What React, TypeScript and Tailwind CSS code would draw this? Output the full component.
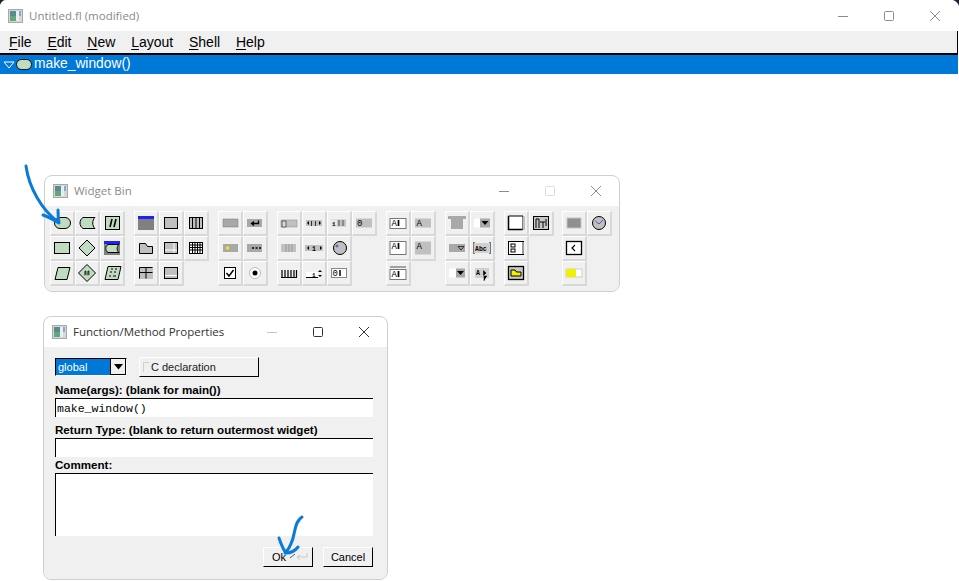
import { ReactNode } from 'react';

const G = '#c0dcc0';
const K = '#000';
const D = '#a8a8a8';

const AppIcon = () => (
    <svg width="15" height="14" viewBox="0 0 15 14" className="shrink-0">
        <rect x="0.5" y="0.5" width="14" height="13" fill="#d4d8dc" stroke="#a8a8a8" />
        <rect x="2" y="2" width="6" height="10" fill="#5a8a8c" />
        <rect x="2" y="7" width="6" height="5" fill="#62a878" />
        <rect x="8" y="2" width="3" height="10" fill="#e8eef2" />
        <rect x="11" y="2" width="2" height="5" fill="#8aa8c4" />
    </svg>
);

const WinButtons = ({ dim, closeDark }: { dim?: boolean; closeDark?: boolean }) => {
    const c = closeDark ? '#333' : '#8c8c8c';
    return (
        <div className="flex items-center gap-[34px]">
            <svg width="12" height="12" viewBox="0 0 12 12">
                <path d="M1 6.5H11" stroke={closeDark ? '#c4c4c4' : '#8c8c8c'} />
            </svg>
            <svg width="12" height="12" viewBox="0 0 12 12">
                <rect x="1.5" y="1.5" width="9" height="9" rx="1" fill="none" stroke={dim ? '#dcdcdc' : c} />
            </svg>
            <svg width="12" height="12" viewBox="0 0 12 12">
                <path d="M1 1L11 11M11 1L1 11" stroke={c} />
            </svg>
        </div>
    );
};

const T = ({ x, y, s = 7, c = K, b = false, children }: { x: number; y: number; s?: number; c?: string; b?: boolean; children: ReactNode }) => (
    <text x={x} y={y} fontSize={s} fill={c} fontWeight={b ? 700 : 400} fontFamily="'Liberation Mono', monospace">
        {children}
    </text>
);

const icons: Record<string, ReactNode> = {
    fn: <rect x="4.5" y="6.5" width="16" height="11" rx="5.5" fill={G} stroke={K} />,
    code: <path d="M8 6.5H20C17 9 17 15 20 17.5H8C4 15 4 9 8 6.5Z" fill={G} stroke={K} />,
    block: (
        <>
            <rect x="5.5" y="5.5" width="14" height="13" fill={G} stroke={K} />
            <path d="M10 16L12 8M14 16L16 8" stroke={K} strokeWidth="1.6" />
        </>
    ),
    comment: <rect x="4.5" y="6.5" width="15" height="11" fill={G} stroke={K} />,
    decl: <path d="M12 4L20 12L12 20L4 12Z" fill={G} stroke={K} />,
    klass: (
        <>
            <rect x="4" y="5" width="16" height="14" fill="#808080" />
            <rect x="4" y="5" width="16" height="3" fill="#2222ee" />
            <path d="M8 8.5H19C16.5 10.5 16.5 14.5 19 16.5H8C5 14.5 5 10.5 8 8.5Z" fill={G} stroke={K} />
        </>
    ),
    para: <path d="M8 6.5H20L17 18.5H5Z" fill={G} stroke={K} />,
    declBlock: (
        <>
            <path d="M12 3.5L20.5 12L12 20.5L3.5 12Z" fill={G} stroke={K} />
            <path d="M10.5 9.5L10 14.5M13.5 9.5L13 14.5M9 11H15M9 13H15" stroke={K} strokeWidth="0.7" />
        </>
    ),
    data: (
        <>
            <path d="M8 5.5H21L18 18.5H5Z" fill={G} stroke={K} />
            <path d="M11 8H13M15 8H17M9 15H11M13 15H16M10 11H12M14 11H16" stroke={K} strokeWidth="1.2" />
        </>
    ),
    window: (
        <>
            <rect x="4" y="5" width="16" height="14" fill="#808080" />
            <rect x="4" y="5" width="16" height="3" fill="#2222ee" />
        </>
    ),
    group: <rect x="5.5" y="6.5" width="13" height="11" fill="#c0c0c0" stroke={K} />,
    pack: (
        <>
            <rect x="5.5" y="6.5" width="13" height="11" fill="#c0c0c0" stroke={K} />
            <path d="M8.5 7V17M12 7V17M15.5 7V17" stroke={K} />
        </>
    ),
    tabs: <path d="M5.5 17.5V7.5H11.5L13.5 10.5H18.5V17.5Z" fill="#c0c0c0" stroke={K} />,
    scroll: (
        <>
            <rect x="5.5" y="6.5" width="13" height="11" fill="#c0c0c0" stroke={K} />
            <path d="M6 14H18M15 7V17" stroke="#fff" />
        </>
    ),
    table: (
        <>
            <rect x="5.5" y="6.5" width="13" height="11" fill="#fff" stroke={K} />
            <path d="M6 9H18M6 11.5H18M6 14H18M8.5 7V17M11 7V17M13.5 7V17M16 7V17" stroke={K} />
        </>
    ),
    tile: (
        <>
            <rect x="5" y="6" width="14" height="12" fill="#c0c0c0" />
            <path d="M5.5 11.5H18.5M12 6.5V17.5" stroke={K} />
            <path d="M5.5 6.5H18.5M5.5 6.5V17.5" stroke={K} />
        </>
    ),
    wizard: (
        <>
            <rect x="5.5" y="6.5" width="13" height="11" fill="#c0c0c0" stroke={K} />
            <path d="M6 14.5H18" stroke="#fff" />
        </>
    ),
    button: <rect x="5" y="8" width="15" height="8" fill={D} stroke="#777" strokeWidth="0.5" />,
    ret: (
        <>
            <rect x="4" y="8" width="15" height="8" fill={D} />
            <path d="M15.5 9.5V12.5H9M11 10.5L8.5 12.5L11 14.5" stroke={K} strokeWidth="1.3" fill="none" />
        </>
    ),
    light: (
        <>
            <rect x="5" y="8" width="15" height="8" fill={D} />
            <rect x="8" y="10.5" width="3" height="3" fill="#f0f000" />
        </>
    ),
    repeat: (
        <>
            <rect x="4" y="8" width="15" height="8" fill={D} />
            <path d="M9 12H11M12.5 12H14.5M16 12H18" stroke={K} strokeWidth="1.5" />
        </>
    ),
    check: (
        <>
            <rect x="6.5" y="6.5" width="11" height="11" fill="#fff" stroke={K} />
            <path d="M8.5 12L11 15L15.5 9" stroke={K} strokeWidth="1.5" fill="none" />
        </>
    ),
    radio: (
        <>
            <circle cx="12" cy="12" r="5.5" fill="#fff" stroke="#bbb" />
            <circle cx="12" cy="12" r="2.5" fill={K} />
        </>
    ),
    slider: (
        <>
            <rect x="4" y="9" width="16" height="7" fill="#c0c0c0" stroke="#888" strokeWidth="0.5" />
            <rect x="5" y="10" width="4" height="6" fill="#d8d8d8" stroke={K} strokeWidth="0.5" />
        </>
    ),
    spinBar: (
        <>
            <rect x="4" y="9" width="16" height="6" fill="#c0c0c0" />
            <path d="M5 12L7 10V14ZM19 12L17 10V14Z" fill={K} />
            <path d="M9.5 10V15M13.5 10V15" stroke="#333" />
        </>
    ),
    valSlider: (
        <>
            <rect x="4" y="8.5" width="15" height="7" fill="#c0c0c0" />
            <rect x="4" y="8.5" width="6" height="7" fill="#e8e8e8" />
            <T x={5} y={14.5} s={6} b>1</T>
            <path d="M12 9V15M16 9V15" stroke="#555" />
        </>
    ),
    valOut: (
        <>
            <rect x="4" y="7.5" width="16" height="9" fill="#c0c0c0" />
            <T x={5} y={15} s={9}>0</T>
        </>
    ),
    scrollbar: (
        <>
            <rect x="4" y="8" width="15" height="8" fill="#c0c0c0" />
            <path d="M9 8V16M12 8V16M15 8V16" stroke="#999" />
        </>
    ),
    spinAdj: (
        <>
            <rect x="3" y="9" width="18" height="6" fill="#c0c0c0" />
            <path d="M5 12L7 10V14ZM20 12L18 10V14Z" fill={K} />
            <T x={10} y={14.5} s={6.5} b>1</T>
        </>
    ),
    dial: (
        <>
            <circle cx="13" cy="12" r="6.5" fill="#c0c0c0" stroke={K} />
            <circle cx="10" cy="10" r="1" fill="none" stroke="#2222cc" strokeWidth="0.7" />
        </>
    ),
    ticks: <path d="M4 16.5H20M5 9V16M8 9V16M11 9V16M14 9V16M17 9V16M19.5 9V16" stroke={K} strokeWidth="1.2" />,
    spinner: (
        <>
            <rect x="4" y="11" width="12" height="5" fill="#fff" />
            <path d="M4 16.5H16" stroke={K} />
            <T x={10} y={15.5} s={6} b>1</T>
            <path d="M18 9L20 11H16ZM18 16L20 14H16Z" fill={K} />
        </>
    ),
    valInput: (
        <>
            <rect x="4.5" y="7.5" width="15" height="9" fill="#fff" stroke="#888" />
            <T x={5.5} y={15} s={9}>0</T>
            <path d="M13 9V15" stroke={K} strokeWidth="1.5" />
        </>
    ),
    input: (
        <>
            <rect x="4" y="7.5" width="16" height="10" fill="#fff" stroke="#777" />
            <T x={5.5} y={15} s={9}>A</T>
            <path d="M12.5 9V15" stroke={K} strokeWidth="1.7" />
        </>
    ),
    output: (
        <>
            <rect x="4" y="7.5" width="16" height="9" fill="#c0c0c0" />
            <T x={5.5} y={14.5} s={9}>A</T>
        </>
    ),
    editor: (
        <>
            <rect x="4" y="5.5" width="16" height="13" fill="#fff" stroke="#777" />
            <T x={5.5} y={13} s={9}>A</T>
            <path d="M12.5 7V13" stroke={K} strokeWidth="1.7" />
        </>
    ),
    display: (
        <>
            <rect x="4" y="5.5" width="16" height="13" fill="#c0c0c0" />
            <T x={5.5} y={13} s={9}>A</T>
        </>
    ),
    term: (
        <>
            <rect x="4" y="8.5" width="16" height="10" fill="#fff" stroke="#777" />
            <path d="M4 6H20" stroke="#555" />
            <T x={5.5} y={16} s={9}>A</T>
            <path d="M12.5 10V16" stroke={K} strokeWidth="1.7" />
        </>
    ),
    menubar: (
        <>
            <rect x="3" y="5" width="18" height="3" fill={D} />
            <rect x="6" y="8" width="12" height="10" fill={D} />
        </>
    ),
    choice: (
        <>
            <rect x="4" y="7.5" width="6" height="9" fill="#fff" />
            <rect x="10" y="7.5" width="10" height="9" fill={D} />
            <path d="M11.5 10H18.5L15 14Z" fill={K} />
        </>
    ),
    menuBtn: (
        <>
            <rect x="4" y="8" width="16" height="8" fill={D} />
            <path d="M13 10.5H19L16 14Z" fill="none" stroke="#333" />
        </>
    ),
    browser: (
        <>
            <path d="M4 6V18M20 6V18" stroke={K} />
            <rect x="4" y="7" width="16" height="10" fill="#d0d0d0" />
            <T x={5} y={15} s={6.5} b>Abc</T>
        </>
    ),
    inChoice: (
        <>
            <rect x="4" y="7.5" width="7" height="9" fill="#fff" />
            <rect x="11" y="7.5" width="9" height="9" fill={D} />
            <path d="M12 10H19L15.5 14Z" fill={K} />
        </>
    ),
    tree: (
        <>
            <rect x="5" y="7" width="14" height="10" fill="#d0d0d0" />
            <T x={6} y={14} s={6.5} b>A</T>
            <path d="M13.5 9.5V14.5L16 12Z M17 15H14V20" fill={K} stroke={K} strokeWidth="0.5" />
        </>
    ),
    frame: (
        <>
            <rect x="4" y="5" width="15" height="14" fill="#fff" />
            <path d="M4.5 5V18.5H18.5" stroke={K} strokeWidth="1.5" fill="none" />
            <path d="M4.5 5H19V19" stroke={K} fill="none" />
            <rect x="19" y="5" width="2" height="14" fill="#c0c0c0" />
        </>
    ),
    frameTabs: (
        <>
            <rect x="4.5" y="5.5" width="15" height="13" fill="#c8c8c8" stroke={K} />
            <path d="M7 8V17M7 8H10V17M11 11H16M14 11V17M17 8V15" stroke={K} fill="none" />
        </>
    ),
    frameList: (
        <>
            <rect x="4.5" y="5.5" width="15" height="13" fill="#fff" stroke={K} />
            <rect x="7" y="8" width="4" height="3" fill="none" stroke={K} />
            <rect x="7" y="13" width="4" height="3" fill="none" stroke={K} />
            <rect x="18" y="6" width="2" height="12" fill="#999" />
        </>
    ),
    frameFolder: (
        <>
            <rect x="4.5" y="5.5" width="15" height="13" fill="#c8c8c8" stroke={K} strokeWidth="1.3" />
            <path d="M7 15V9H11L12.5 11H17V15Z" fill="#f0f000" stroke={K} />
        </>
    ),
    box: <rect x="5" y="7" width="14" height="10" fill="#909090" stroke="#c4c4c4" />,
    clock: (
        <>
            <circle cx="12" cy="12" r="6.5" fill="#c0c0c0" stroke={K} />
            <path d="M8.5 10L12 13L16 9" stroke="#2222cc" strokeWidth="0.7" fill="none" />
        </>
    ),
    frameHelp: (
        <>
            <rect x="4.5" y="5.5" width="15" height="13" fill="#fff" stroke={K} strokeWidth="1.3" />
            <path d="M13 9L10 12L13 15" stroke={K} fill="none" strokeWidth="1.2" />
        </>
    ),
    progress: (
        <>
            <rect x="4" y="8" width="16" height="8" fill="#fff" stroke="#ccc" />
            <rect x="4" y="8" width="10" height="8" fill="#f0f000" />
        </>
    ),
};

const groups: (string | null)[][][] = [
    [['fn', 'code', 'block'], ['comment', 'decl', 'klass'], ['para', 'declBlock', 'data']],
    [['window', 'group', 'pack'], ['tabs', 'scroll', 'table'], ['tile', 'wizard', null]],
    [['button', 'ret'], ['light', 'repeat'], ['check', 'radio']],
    [['slider', 'spinBar', 'valSlider', 'valOut'], ['scrollbar', 'spinAdj', 'dial', null], ['ticks', 'spinner', 'valInput', null]],
    [['input', 'output'], ['editor', 'display'], ['term', null]],
    [['menubar', 'choice'], ['menuBtn', 'browser'], ['inChoice', 'tree']],
    [['frame', 'frameTabs'], ['frameList', null], ['frameFolder', null]],
    [['box', 'clock'], ['frameHelp', null], ['progress', null]],
];

const Cell = ({ name }: { name: string | null }) =>
    name ? (
        <div className="w-[25px] h-[25px] bg-[#f0f0f0] border-t border-l border-t-white border-l-white border-r-2 border-b-2 border-r-[#d8d8d8] border-b-[#d8d8d8] flex items-center justify-center">
            <svg width="24" height="24" viewBox="0 0 24 24" className="shrink-0">
                {icons[name]}
            </svg>
        </div>
    ) : (
        <div className="w-[25px] h-[25px]" />
    );

const WidgetBin = () => (
    <div className="absolute left-[44px] top-[175px] w-[576px] h-[117px] rounded-lg border border-[#cfcfcf] bg-white overflow-hidden flex flex-col">
        <div className="h-[30px] shrink-0 flex items-center justify-between pl-[8px] pr-[17px]">
            <div className="flex items-center gap-[6px]">
                <AppIcon />
                <span className="text-[11.5px] text-[#8a8a8a] font-['Open_Sans',sans-serif]">Widget Bin</span>
            </div>
            <WinButtons dim />
        </div>
        <div className="flex-1 bg-[#f0f0f0] flex gap-[9px] pl-[5px] pt-[5px]">
            {groups.map((rows, i) => (
                <div key={i} className="flex flex-col last:ml-[-1px]">
                    {rows.map((row, j) => (
                        <div key={j} className="flex">
                            {row.map((name, k) => (
                                <Cell key={k} name={name} />
                            ))}
                        </div>
                    ))}
                </div>
            ))}
        </div>
    </div>
);

const FieldLabel = ({ children }: { children: ReactNode }) => (
    <div className="h-[13px] text-[11.6px] leading-[13px] font-bold text-black">{children}</div>
);

const Dialog = () => (
    <div className="absolute left-[43px] top-[316px] w-[345px] h-[264px] rounded-lg border border-[#cfcfcf] bg-white overflow-hidden flex flex-col">
        <div className="h-[30px] shrink-0 flex items-center justify-between pl-[8px] pr-[17px]">
            <div className="flex items-center gap-[6px]">
                <AppIcon />
                <span className="text-[11.5px] text-[#333] font-['Open_Sans',sans-serif]">Function/Method Properties</span>
            </div>
            <WinButtons closeDark />
        </div>
        <div className="flex-1 bg-[#f0f0f0] pl-[11px] pr-[14px] pt-[10px] flex flex-col">
            <div className="flex items-center gap-[12px] h-[20px]">
                <div className="w-[72px] h-[18px] flex border-t border-l border-black border-r border-b border-r-white border-b-white bg-white">
                    <div className="w-[54px] bg-[#0078d7] text-white text-[11px] leading-[17px] pl-[2px]">global</div>
                    <div className="flex-1 bg-[#f0f0f0] border-l border-r border-b border-black flex items-center justify-center">
                        <svg width="9" height="6" viewBox="0 0 9 6">
                            <path d="M0 0H9L4.5 5.5Z" fill="#000" />
                        </svg>
                    </div>
                </div>
                <div className="w-[120px] h-[20px] bg-[#f0f0f0] border-t border-l border-t-white border-l-white border-r border-b border-r-black border-b-black flex items-center pl-[3px] gap-[2px] text-[11px] text-[#222]">
                    <div className="w-[6px] h-[10px] border-l border-t border-[#d0d0d0]" />
                    C declaration
                </div>
            </div>
            <div className="mt-[6px]">
                <FieldLabel>Name(args): (blank for main())</FieldLabel>
            </div>
            <div className="mt-[2px] h-[19px] w-[318px] bg-white border-t border-l border-black text-[11.5px] leading-[19px] pl-[1px] text-black font-['Liberation_Mono',monospace]">
                make_window()
            </div>
            <div className="mt-[6px]">
                <FieldLabel>Return Type: (blank to return outermost widget)</FieldLabel>
            </div>
            <div className="mt-[2px] h-[19px] w-[318px] bg-white border-t border-l border-black" />
            <div className="mt-[1px]">
                <FieldLabel>Comment:</FieldLabel>
            </div>
            <div className="mt-[2px] h-[63px] w-[318px] bg-white border-t border-l border-black" />
            <div className="mt-[11px] flex justify-end gap-[10px]">
                <div className="w-[50px] h-[20px] bg-[#f0f0f0] border-t border-l border-t-white border-l-white border-r border-b border-r-black border-b-black text-[11px] flex items-center justify-between pl-[8px] pr-[2px] text-black">
                    Ok
                    <svg width="20" height="10" viewBox="0 0 20 10">
                        <path d="M0 6L5 2" stroke="#555" />
                        <path d="M17 1V5H8M10 3L7 5L10 8" stroke="#c8c8c8" fill="none" />
                    </svg>
                </div>
                <div className="w-[50px] h-[20px] bg-[#f0f0f0] border-t border-l border-t-white border-l-white border-r border-b border-r-black border-b-black text-[11px] flex items-center justify-center text-black">
                    Cancel
                </div>
            </div>
        </div>
    </div>
);

const App = () => {
    const menus = [
        ['F', 'ile'],
        ['E', 'dit'],
        ['N', 'ew'],
        ['L', 'ayout'],
        ['S', 'hell'],
        ['H', 'elp'],
    ];

    return (
        <div className="relative w-[959px] h-[581px] overflow-hidden bg-white font-['Liberation_Sans',Arial,sans-serif]">
            <div className="h-[31px] flex items-center justify-between pl-[8px] pr-[18px]">
                <div className="flex items-center gap-[6px] font-['Open_Sans',sans-serif]">
                    <AppIcon />
                    <span className="text-[11.5px] text-[#8a8a8a]">Untitled.fl (modified)</span>
                </div>
                <WinButtons />
            </div>
            <div className="h-[24px] mr-[1px] bg-[#f0f0f0] border-b-2 border-r border-black flex items-center pl-[9px] gap-[15.8px] text-sm text-black">
                {menus.map(([first, rest]) => (
                    <span key={first}>
                        <span className="underline underline-offset-2">{first}</span>
                        {rest}
                    </span>
                ))}
            </div>
            <div className="h-[19px] mr-[1px] bg-[#0078d7] flex items-center pl-[3px] gap-[1px] text-[13.8px] text-white">
                <svg width="12" height="8" viewBox="0 0 12 8">
                    <path d="M1 1H11L6 7Z" fill="none" stroke="#fff" />
                </svg>
                <svg width="16" height="12" viewBox="0 0 16 12">
                    <rect x="0.5" y="0.5" width="15" height="10" rx="5" fill={G} stroke="#111" />
                </svg>
                <span className="ml-[1px] mb-[1px]">make_window()</span>
            </div>

            <WidgetBin />
            <Dialog />

            <svg width="959" height="581" viewBox="0 0 959 581" className="absolute left-0 top-0 pointer-events-none">
                <path d="M0 0H6C3 0 1 2 0 5Z" fill="#1c2433" />
                <path d="M959 0H953C956 1 958 3 959 6Z" fill="#1c2433" />
                <g fill="none" stroke="#0a7bd8" strokeLinecap="round" strokeLinejoin="round">
                    <path d="M26 166C29 188 42 210 58 222" strokeWidth="3" />
                    <path d="M43 215C49 217 54 220 59 223C58 218 58 214 58 210" strokeWidth="3" />
                    <path d="M302 517C294 522 295 535 292 541C290 547 288 550 285 553" strokeWidth="3" />
                    <path d="M279 538C281 544 283 549 286 553C291 553 295 551 298 547" strokeWidth="3" />
                </g>
            </svg>
        </div>
    );
};

export default App;
